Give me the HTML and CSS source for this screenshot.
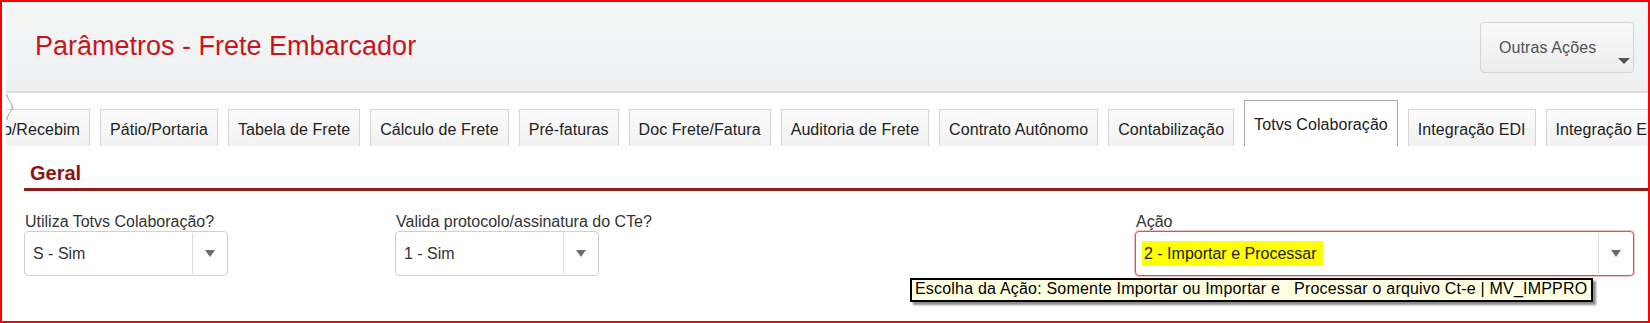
FILE: index.html
```html
<!DOCTYPE html>
<html lang="pt-BR">
<head>
    <meta charset="UTF-8">
    <title>Parâmetros - Frete Embarcador</title>
    <link rel="stylesheet" href="styles.css">
</head>
<body>
<div class="frame">
    <div class="page-header">
        <h1 class="page-title">Parâmetros - Frete Embarcador</h1>
        <div class="btn-actions">Outras Ações<span class="caret"></span></div>
    </div>

    <div class="tabbar">
        <svg class="tab-scroll" width="9" height="26" viewBox="0 0 9 26">
            <path d="M1 0 L1 2 L7 13 L1 24 L1 26" fill="none" stroke="#9a9a9a" stroke-width="1"/>
            <path d="M3 5 L6 13 L3 21" fill="none" stroke="#cfcfcf" stroke-width="1"/>
        </svg>
        <ul class="tabs">
            <li class="tab tab-first"><span>Agendamento/Recebim</span></li>
            <li class="tab">Pátio/Portaria</li>
            <li class="tab">Tabela de Frete</li>
            <li class="tab">Cálculo de Frete</li>
            <li class="tab">Pré-faturas</li>
            <li class="tab">Doc Frete/Fatura</li>
            <li class="tab">Auditoria de Frete</li>
            <li class="tab">Contrato Autônomo</li>
            <li class="tab">Contabilização</li>
            <li class="tab tab-active">Totvs Colaboração</li>
            <li class="tab">Integração EDI</li>
            <li class="tab">Integração ERP</li>
        </ul>
    </div>

    <div class="panel">
        <h2 class="panel-title">Geral</h2>
        <div class="fields">
            <div class="field field-sm">
                <label class="field-label">Utiliza Totvs Colaboração?</label>
                <div class="select">
                    <span class="select-value">S - Sim</span>
                    <span class="select-arrow"><i></i></span>
                </div>
            </div>
            <div class="field field-sm">
                <label class="field-label">Valida protocolo/assinatura do CTe?</label>
                <div class="select">
                    <span class="select-value">1 - Sim</span>
                    <span class="select-arrow"><i></i></span>
                </div>
            </div>
            <div class="field">
                <label class="field-label">Ação</label>
                <div class="select select-error">
                    <span class="select-value"><span class="mark">2 - Importar e Processar</span></span>
                    <span class="select-arrow"><i></i></span>
                </div>
            </div>
        </div>
    </div>

    <div class="tooltip">Escolha da Ação: Somente Importar ou Importar e   Processar o arquivo Ct-e | MV_IMPPRO</div>
</div>
</body>
</html>
```

FILE: styles.css
```css
body {
    margin: 0;
    background: #fff;
}
.frame {
    position: relative;
    width: 1650px;
    height: 323px;
    box-sizing: border-box;
    border: 2px solid #ff0000;
    padding-left: 4px;
    overflow: hidden;
    background: #fff;
    font-family: "Liberation Sans", Arial, sans-serif;
    color: #333;
}

/* header */
.page-header {
    display: flex;
    justify-content: space-between;
    align-items: flex-start;
    height: 89px;
    border-bottom: 2px solid #dcdcdc;
    background: linear-gradient(#f5f6f6, #eeeff1);
}
.page-title {
    margin: 0;
    padding: 28px 0 0 29px;
    font-size: 27px;
    line-height: 32px;
    font-weight: normal;
    color: #c8151b;
}
.btn-actions {
    position: relative;
    margin: 20px 14px 0 0;
    width: 154px;
    height: 51px;
    box-sizing: border-box;
    padding: 16px 0 0 18px;
    border: 1px solid #d4d4d4;
    border-radius: 4px;
    background: linear-gradient(#fafafa, #ececec);
    font-size: 16px;
    line-height: 18px;
    color: #4d5259;
    letter-spacing: 0.1px;
}
.caret {
    position: absolute;
    right: 3px;
    bottom: 8px;
    width: 0;
    height: 0;
    border-left: 6px solid transparent;
    border-right: 6px solid transparent;
    border-top: 6px solid #4f5258;
}

/* tabs */
.tabbar {
    position: relative;
    height: 53px;
    box-sizing: border-box;
    padding-top: 7px;
    overflow: hidden;
}
.tab-scroll {
    position: absolute;
    left: 0;
    top: 1px;
    z-index: 2;
}
.tabs {
    display: flex;
    align-items: flex-end;
    gap: 10px;
    height: 46px;
    margin: 0;
    padding: 0;
    list-style: none;
}
.tab {
    flex-shrink: 0;
    height: 37px;
    box-sizing: border-box;
    padding: 11px 9px 0;
    border: 1px solid #d4d4d4;
    border-bottom: none;
    background: linear-gradient(#fbfbfb, #f2f2f2);
    font-size: 16px;
    line-height: 18px;
    letter-spacing: 0.07px;
    color: #222;
    white-space: nowrap;
}
.tab-first {
    display: flex;
    justify-content: flex-end;
    width: 84px;
    border-left: none;
    overflow: hidden;
}
.tab-active {
    height: 46px;
    padding-top: 15px;
    border-color: #a9a9a9;
    background: #fff;
}

/* panel */
.panel {
    margin-left: 18px;
}
.panel-title {
    margin: 15px 0 0;
    padding: 0 0 3px 6px;
    font-size: 20px;
    line-height: 24px;
    font-weight: bold;
    color: #8a1313;
    border-bottom: 3px solid #8e1a1a;
}
.fields {
    display: grid;
    grid-template-columns: 371px 740px 1fr;
    margin-top: 22px;
    padding-right: 14px;
}
.field-sm {
    width: 204px;
}
.field-label {
    display: block;
    padding-left: 1px;
    font-size: 16px;
    line-height: 18px;
    color: #333;
    white-space: nowrap;
}
.select {
    display: flex;
    align-items: center;
    height: 45px;
    box-sizing: border-box;
    border: 1px solid #cfcfcf;
    border-radius: 4px;
    background: #fff;
}
.select-value {
    flex: 1;
    padding-left: 8px;
    font-size: 16px;
    line-height: 18px;
    color: #333;
}
.select-arrow {
    display: flex;
    align-self: stretch;
    align-items: center;
    justify-content: center;
    width: 34px;
    margin: 1px 0;
    border-left: 1px solid #dcdcdc;
}
.select-arrow i {
    width: 0;
    height: 0;
    border-left: 5px solid transparent;
    border-right: 5px solid transparent;
    border-top: 7px solid #6a6d74;
}
.select-error {
    border-color: #d9534f;
    box-shadow: 0 0 0 1px rgba(217, 83, 79, 0.35);
}
.mark {
    margin-left: -2px;
    padding: 4px 6px 4px 2px;
    background: #ffff00;
    color: #222;
}

/* tooltip over the Ação field */
.tooltip {
    position: absolute;
    left: 908px;
    top: 276px;
    width: 683px;
    height: 24px;
    box-sizing: border-box;
    padding-left: 3px;
    border: 2px solid #000;
    background: #ffffe1;
    box-shadow: 3px 3px 2px rgba(0, 0, 0, 0.45);
    font-size: 16px;
    line-height: 18px;
    letter-spacing: 0.2px;
    color: #000;
    white-space: pre;
}
```
